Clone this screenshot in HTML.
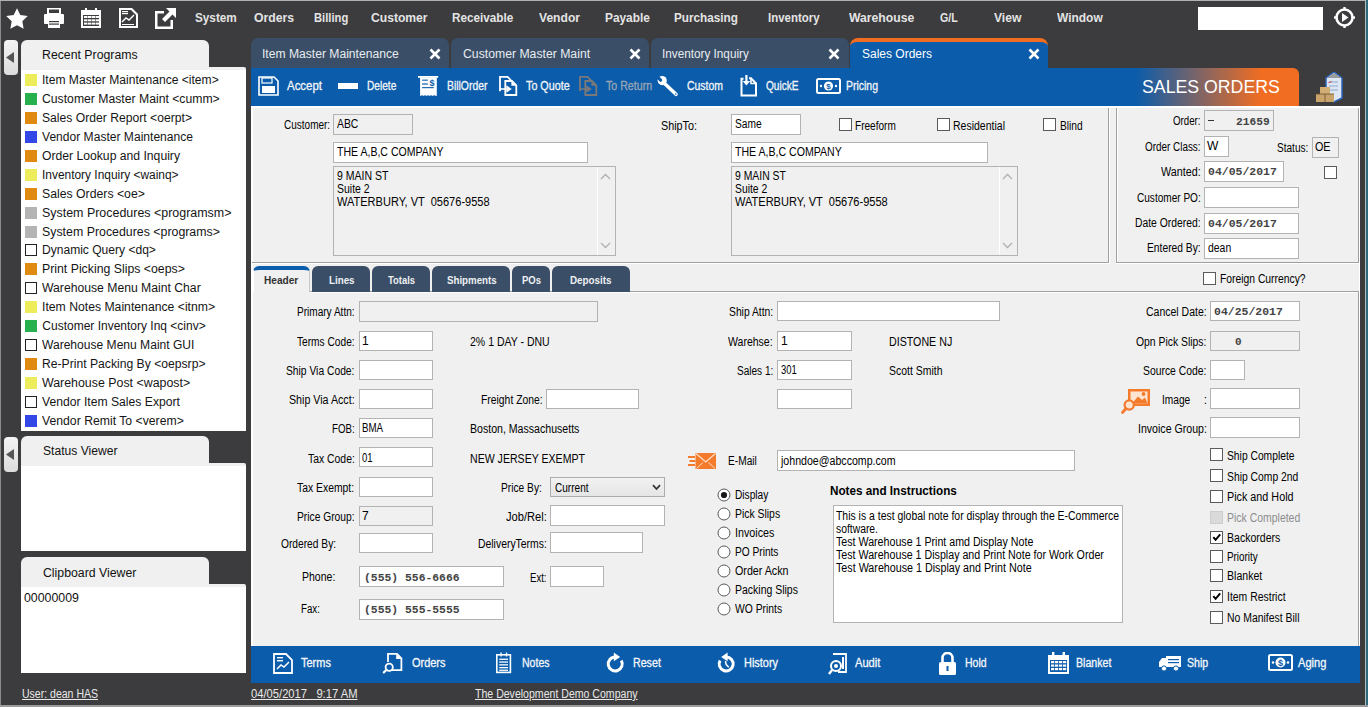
<!DOCTYPE html><html><head><meta charset="utf-8"><style>
html,body{margin:0;padding:0;width:1368px;height:707px;overflow:hidden;background:#3c3c3e}
body>div,body>svg{position:absolute}
</style></head><body>
<div style="left:0px;top:0px;width:1368px;height:707px;background:#3c3c3e"></div>
<div style="left:0px;top:0px;width:1368px;height:1px;background:#b0b0b0"></div>
<div style="left:0px;top:0px;width:1px;height:707px;background:#8c8c8c"></div>
<svg style="left:6px;top:8px" width="22" height="22" viewBox="0 0 22 22"><path d="M11.00 0.30 L14.29 7.07 L21.75 8.11 L16.33 13.33 L17.64 20.74 L11.00 17.20 L4.36 20.74 L5.67 13.33 L0.25 8.11 L7.71 7.07Z" fill="#fff"/></svg>
<svg style="left:44px;top:8px" width="20" height="20" viewBox="0 0 20 20"><rect x="3" y="0" width="14" height="6" fill="#fff"/><rect x="5" y="1.5" width="10" height="3.5" fill="#3c3c3e"/><rect x="0" y="6" width="20" height="10" rx="1" fill="#fff"/><rect x="4" y="12" width="12" height="8" fill="#fff"/><rect x="5" y="13" width="10" height="1.2" fill="#3c3c3e"/><rect x="5" y="15.5" width="10" height="1.2" fill="#3c3c3e"/></svg>
<svg style="left:81px;top:8px" width="20" height="20" viewBox="0 0 20 20"><rect x="0" y="2" width="20" height="18" fill="#fff"/><rect x="4" y="0" width="2" height="4" fill="#fff"/><rect x="14" y="0" width="2" height="4" fill="#fff"/><rect x="2" y="7" width="16" height="11" fill="#3c3c3e"/><rect x="3" y="8" width="3.5" height="2" fill="#fff"/><rect x="3" y="11.3" width="3.5" height="2" fill="#fff"/><rect x="3" y="14.6" width="3.5" height="2" fill="#fff"/><rect x="7" y="8" width="3.5" height="2" fill="#fff"/><rect x="7" y="11.3" width="3.5" height="2" fill="#fff"/><rect x="7" y="14.6" width="3.5" height="2" fill="#fff"/><rect x="11" y="8" width="3.5" height="2" fill="#fff"/><rect x="11" y="11.3" width="3.5" height="2" fill="#fff"/><rect x="11" y="14.6" width="3.5" height="2" fill="#fff"/><rect x="15" y="8" width="3.5" height="2" fill="#fff"/><rect x="15" y="11.3" width="3.5" height="2" fill="#fff"/><rect x="15" y="14.6" width="3.5" height="2" fill="#fff"/></svg>
<svg style="left:119px;top:8px" width="19" height="20" viewBox="0 0 19 20"><path d="M0 0 H13 L19 6 V20 H0Z" fill="#fff"/><path d="M2 2 H12 L17 7 V18 H2Z" fill="#3c3c3e"/><rect x="3" y="3" width="6" height="1.2" fill="#fff"/><rect x="3" y="5" width="6" height="1.2" fill="#fff"/><path d="M3 14 L7 10 L10 12 L15 7" stroke="#fff" stroke-width="1.4" fill="none"/><rect x="3" y="16" width="12" height="1" fill="#fff"/></svg>
<svg style="left:155px;top:8px" width="21" height="21" viewBox="0 0 21 21"><path d="M0 3 H9 V5.5 H2.5 V18.5 H15.5 V12 H18 V21 H0Z" fill="#fff"/><path d="M11 0 H21 V10 L17.5 6.5 L10 14 L7 11 L14.5 3.5Z" fill="#fff"/></svg>
<div style="top:9.39px;font:bold 13px/17px 'Liberation Sans',sans-serif;color:#e4e4e4;white-space:pre;transform-origin:0 0;transform:scaleX(0.9026);left:194.90px;">System</div>
<div style="top:9.39px;font:bold 13px/17px 'Liberation Sans',sans-serif;color:#e4e4e4;white-space:pre;transform-origin:0 0;transform:scaleX(0.9413);left:253.50px;">Orders</div>
<div style="top:9.39px;font:bold 13px/17px 'Liberation Sans',sans-serif;color:#e4e4e4;white-space:pre;transform-origin:0 0;transform:scaleX(0.8615);left:314.20px;">Billing</div>
<div style="top:9.39px;font:bold 13px/17px 'Liberation Sans',sans-serif;color:#e4e4e4;white-space:pre;transform-origin:0 0;transform:scaleX(0.9325);left:371.20px;">Customer</div>
<div style="top:9.39px;font:bold 13px/17px 'Liberation Sans',sans-serif;color:#e4e4e4;white-space:pre;transform-origin:0 0;transform:scaleX(0.9013);left:451.80px;">Receivable</div>
<div style="top:9.39px;font:bold 13px/17px 'Liberation Sans',sans-serif;color:#e4e4e4;white-space:pre;transform-origin:0 0;transform:scaleX(0.9297);left:539.20px;">Vendor</div>
<div style="top:9.39px;font:bold 13px/17px 'Liberation Sans',sans-serif;color:#e4e4e4;white-space:pre;transform-origin:0 0;transform:scaleX(0.9124);left:605.40px;">Payable</div>
<div style="top:9.39px;font:bold 13px/17px 'Liberation Sans',sans-serif;color:#e4e4e4;white-space:pre;transform-origin:0 0;transform:scaleX(0.9025);left:673.70px;">Purchasing</div>
<div style="top:9.39px;font:bold 13px/17px 'Liberation Sans',sans-serif;color:#e4e4e4;white-space:pre;transform-origin:0 0;transform:scaleX(0.8803);left:767.80px;">Inventory</div>
<div style="top:9.39px;font:bold 13px/17px 'Liberation Sans',sans-serif;color:#e4e4e4;white-space:pre;transform-origin:0 0;transform:scaleX(0.9368);left:848.50px;">Warehouse</div>
<div style="top:9.39px;font:bold 13px/17px 'Liberation Sans',sans-serif;color:#e4e4e4;white-space:pre;transform-origin:0 0;transform:scaleX(0.8203);left:940.40px;">G/L</div>
<div style="top:9.39px;font:bold 13px/17px 'Liberation Sans',sans-serif;color:#e4e4e4;white-space:pre;transform-origin:0 0;transform:scaleX(0.9322);left:994.00px;">View</div>
<div style="top:9.39px;font:bold 13px/17px 'Liberation Sans',sans-serif;color:#e4e4e4;white-space:pre;transform-origin:0 0;transform:scaleX(0.9197);left:1057.40px;">Window</div>
<div style="left:1198px;top:7px;width:125px;height:23px;background:#fff"></div>
<svg style="left:1334px;top:7px" width="21" height="21" viewBox="0 0 21 21"><circle cx="10.5" cy="10.5" r="8" stroke="#fff" stroke-width="2.6" fill="none"/><path d="M8 6 L14.5 10.5 L8 15Z" fill="#fff"/><rect x="9.3" y="0" width="2.4" height="3" fill="#fff"/><rect x="9.3" y="18" width="2.4" height="3" fill="#fff"/><rect x="0" y="9.3" width="3" height="2.4" fill="#fff"/><rect x="18" y="9.3" width="3" height="2.4" fill="#fff"/></svg>
<div style="left:4px;top:40px;width:14px;height:35px;background:linear-gradient(#f4f4f4,#dcdcdc);border-radius:4px"></div>
<svg style="left:6px;top:52px" width="9" height="11" viewBox="0 0 9 11"><path d="M8 0 V11 L0 5.5Z" fill="#555"/></svg>
<div style="left:21px;top:40px;width:188px;height:30px;background:#f0f0f0;border-radius:6px 6px 0 0"></div>
<div style="left:21px;top:67px;width:225px;height:4px;background:#f0f0f0;border-radius:0 2px 0 0"></div>
<div style="left:21px;top:70px;width:225px;height:361px;background:#fff"></div>
<div style="top:46.84px;font:12px/16px 'Liberation Sans',sans-serif;color:#111;white-space:pre;transform-origin:0 0;transform:scaleX(1.0246);left:42.30px;">Recent Programs</div>
<div style="left:25px;top:74px;width:12px;height:12px;background:#eded5c"></div>
<div style="top:71.84px;font:12px/16px 'Liberation Sans',sans-serif;color:#151515;white-space:pre;transform-origin:0 0;transform:scaleX(1.0074);left:42.30px;">Item Master Maintenance &lt;item&gt;</div>
<div style="left:25px;top:93px;width:12px;height:12px;background:#27b04e"></div>
<div style="top:90.84px;font:12px/16px 'Liberation Sans',sans-serif;color:#151515;white-space:pre;transform-origin:0 0;transform:scaleX(1.0172);left:42.30px;">Customer Master Maint &lt;cumm&gt;</div>
<div style="left:25px;top:112px;width:12px;height:12px;background:#e08a12"></div>
<div style="top:109.84px;font:12px/16px 'Liberation Sans',sans-serif;color:#151515;white-space:pre;transform-origin:0 0;transform:scaleX(1.0128);left:42.30px;">Sales Order Report &lt;oerpt&gt;</div>
<div style="left:25px;top:131px;width:12px;height:12px;background:#3347e6"></div>
<div style="top:128.84px;font:12px/16px 'Liberation Sans',sans-serif;color:#151515;white-space:pre;transform-origin:0 0;transform:scaleX(1.0060);left:42.30px;">Vendor Master Maintenance</div>
<div style="left:25px;top:150px;width:12px;height:12px;background:#e08a12"></div>
<div style="top:147.84px;font:12px/16px 'Liberation Sans',sans-serif;color:#151515;white-space:pre;transform-origin:0 0;transform:scaleX(1.0140);left:42.30px;">Order Lookup and Inquiry</div>
<div style="left:25px;top:169px;width:12px;height:12px;background:#eded5c"></div>
<div style="top:166.84px;font:12px/16px 'Liberation Sans',sans-serif;color:#151515;white-space:pre;transform-origin:0 0;transform:scaleX(0.9934);left:42.30px;">Inventory Inquiry &lt;wainq&gt;</div>
<div style="left:25px;top:188px;width:12px;height:12px;background:#e08a12"></div>
<div style="top:185.84px;font:12px/16px 'Liberation Sans',sans-serif;color:#151515;white-space:pre;transform-origin:0 0;transform:scaleX(1.0218);left:42.30px;">Sales Orders &lt;oe&gt;</div>
<div style="left:25px;top:207px;width:12px;height:12px;background:#b4b4b4"></div>
<div style="top:204.84px;font:12px/16px 'Liberation Sans',sans-serif;color:#151515;white-space:pre;transform-origin:0 0;transform:scaleX(1.0367);left:42.30px;">System Procedures &lt;programsm&gt;</div>
<div style="left:25px;top:226px;width:12px;height:12px;background:#b4b4b4"></div>
<div style="top:223.84px;font:12px/16px 'Liberation Sans',sans-serif;color:#151515;white-space:pre;transform-origin:0 0;transform:scaleX(1.0301);left:42.30px;">System Procedures &lt;programs&gt;</div>
<div style="left:25px;top:244px;width:12px;height:12px;box-sizing:border-box;border:1px solid #222;background:#fff"></div>
<div style="top:241.84px;font:12px/16px 'Liberation Sans',sans-serif;color:#151515;white-space:pre;transform-origin:0 0;transform:scaleX(1.0044);left:42.30px;">Dynamic Query &lt;dq&gt;</div>
<div style="left:25px;top:263px;width:12px;height:12px;background:#e08a12"></div>
<div style="top:260.84px;font:12px/16px 'Liberation Sans',sans-serif;color:#151515;white-space:pre;transform-origin:0 0;transform:scaleX(1.0244);left:42.30px;">Print Picking Slips &lt;oeps&gt;</div>
<div style="left:25px;top:282px;width:12px;height:12px;box-sizing:border-box;border:1px solid #222;background:#fff"></div>
<div style="top:279.84px;font:12px/16px 'Liberation Sans',sans-serif;color:#151515;white-space:pre;transform-origin:0 0;transform:scaleX(1.0154);left:42.30px;">Warehouse Menu Maint Char</div>
<div style="left:25px;top:301px;width:12px;height:12px;background:#eded5c"></div>
<div style="top:298.84px;font:12px/16px 'Liberation Sans',sans-serif;color:#151515;white-space:pre;transform-origin:0 0;transform:scaleX(1.0176);left:42.30px;">Item Notes Maintenance &lt;itnm&gt;</div>
<div style="left:25px;top:320px;width:12px;height:12px;background:#27b04e"></div>
<div style="top:317.84px;font:12px/16px 'Liberation Sans',sans-serif;color:#151515;white-space:pre;transform-origin:0 0;left:42.30px;">Customer Inventory Inq &lt;cinv&gt;</div>
<div style="left:25px;top:339px;width:12px;height:12px;box-sizing:border-box;border:1px solid #222;background:#fff"></div>
<div style="top:336.84px;font:12px/16px 'Liberation Sans',sans-serif;color:#151515;white-space:pre;transform-origin:0 0;transform:scaleX(1.0053);left:42.30px;">Warehouse Menu Maint GUI</div>
<div style="left:25px;top:358px;width:12px;height:12px;background:#e08a12"></div>
<div style="top:355.84px;font:12px/16px 'Liberation Sans',sans-serif;color:#151515;white-space:pre;transform-origin:0 0;transform:scaleX(1.0130);left:42.30px;">Re-Print Packing By &lt;oepsrp&gt;</div>
<div style="left:25px;top:377px;width:12px;height:12px;background:#eded5c"></div>
<div style="top:374.84px;font:12px/16px 'Liberation Sans',sans-serif;color:#151515;white-space:pre;transform-origin:0 0;transform:scaleX(1.0313);left:42.30px;">Warehouse Post &lt;wapost&gt;</div>
<div style="left:25px;top:396px;width:12px;height:12px;box-sizing:border-box;border:1px solid #222;background:#fff"></div>
<div style="top:393.84px;font:12px/16px 'Liberation Sans',sans-serif;color:#151515;white-space:pre;transform-origin:0 0;transform:scaleX(1.0140);left:42.30px;">Vendor Item Sales Export</div>
<div style="left:25px;top:415px;width:12px;height:12px;background:#3347e6"></div>
<div style="top:412.84px;font:12px/16px 'Liberation Sans',sans-serif;color:#151515;white-space:pre;transform-origin:0 0;transform:scaleX(1.0187);left:42.30px;">Vendor Remit To &lt;verem&gt;</div>
<div style="left:4px;top:437px;width:14px;height:35px;background:linear-gradient(#f4f4f4,#dcdcdc);border-radius:4px"></div>
<svg style="left:6px;top:449px" width="9" height="11" viewBox="0 0 9 11"><path d="M8 0 V11 L0 5.5Z" fill="#555"/></svg>
<div style="left:21px;top:436px;width:188px;height:30px;background:#f0f0f0;border-radius:6px 6px 0 0"></div>
<div style="left:21px;top:463px;width:225px;height:4px;background:#f0f0f0;border-radius:0 2px 0 0"></div>
<div style="left:21px;top:466px;width:225px;height:85px;background:#fff"></div>
<div style="top:442.84px;font:12px/16px 'Liberation Sans',sans-serif;color:#111;white-space:pre;transform-origin:0 0;transform:scaleX(1.0081);left:42.60px;">Status Viewer</div>
<div style="left:21px;top:557px;width:188px;height:30px;background:#f0f0f0;border-radius:6px 6px 0 0"></div>
<div style="left:21px;top:584px;width:225px;height:4px;background:#f0f0f0;border-radius:0 2px 0 0"></div>
<div style="left:21px;top:587px;width:225px;height:86px;background:#fff"></div>
<div style="top:564.84px;font:12px/16px 'Liberation Sans',sans-serif;color:#111;white-space:pre;transform-origin:0 0;transform:scaleX(1.0241);left:42.60px;">Clipboard Viewer</div>
<div style="top:589.84px;font:12px/16px 'Liberation Sans',sans-serif;color:#111;white-space:pre;transform-origin:0 0;transform:scaleX(1.0281);left:23.50px;">00000009</div>
<div style="top:686.34px;font:12px/16px 'Liberation Sans',sans-serif;color:#e8e8e8;white-space:pre;transform-origin:0 0;transform:scaleX(0.8766);left:22.30px;text-decoration:underline">User: dean HAS</div>
<div style="left:251px;top:38px;width:198px;height:31px;background:#3a4f67;border-radius:7px 7px 0 0"></div>
<div style="top:46.14px;font:12px/16px 'Liberation Sans',sans-serif;color:#e8ecf0;white-space:pre;transform-origin:0 0;transform:scaleX(1.0096);left:262.30px;">Item Master Maintenance</div>
<svg style="left:429px;top:48px" width="12" height="12" viewBox="0 0 12 12"><path d="M1.5 1.5 L10.5 10.5 M10.5 1.5 L1.5 10.5" stroke="#fff" stroke-width="2.6"/></svg>
<div style="left:451px;top:38px;width:198px;height:31px;background:#3a4f67;border-radius:7px 7px 0 0"></div>
<div style="top:46.14px;font:12px/16px 'Liberation Sans',sans-serif;color:#e8ecf0;white-space:pre;transform-origin:0 0;transform:scaleX(1.0192);left:462.50px;">Customer Master Maint</div>
<svg style="left:629px;top:48px" width="12" height="12" viewBox="0 0 12 12"><path d="M1.5 1.5 L10.5 10.5 M10.5 1.5 L1.5 10.5" stroke="#fff" stroke-width="2.6"/></svg>
<div style="left:651px;top:38px;width:198px;height:31px;background:#3a4f67;border-radius:7px 7px 0 0"></div>
<div style="top:46.14px;font:12px/16px 'Liberation Sans',sans-serif;color:#e8ecf0;white-space:pre;transform-origin:0 0;transform:scaleX(0.9786);left:661.90px;">Inventory Inquiry</div>
<svg style="left:828.4px;top:48px" width="12" height="12" viewBox="0 0 12 12"><path d="M1.5 1.5 L10.5 10.5 M10.5 1.5 L1.5 10.5" stroke="#fff" stroke-width="2.6"/></svg>
<div style="left:850px;top:38px;width:198px;height:31px;background:#0b5cab;border-radius:8px 8px 0 0;border-top:4px solid #f06d22;box-sizing:border-box"></div>
<div style="top:46.14px;font:12px/16px 'Liberation Sans',sans-serif;color:#fff;white-space:pre;transform-origin:0 0;left:862.00px;">Sales Orders</div>
<svg style="left:1028.3px;top:48px" width="12" height="12" viewBox="0 0 12 12"><path d="M1.5 1.5 L10.5 10.5 M10.5 1.5 L1.5 10.5" stroke="#fff" stroke-width="2.6"/></svg>
<div style="left:251px;top:68px;width:1048px;height:38px;background:linear-gradient(90deg,#0b5cab 0px,#0b5cab 885px,#f06d22 1010px,#f06d22);border-radius:0 6px 0 0"></div>
<div style="top:76.26px;font:18px/23px 'Liberation Sans',sans-serif;color:#fff;white-space:pre;transform-origin:0 0;transform:scaleX(0.9843);left:1141.90px;">SALES ORDERS</div>
<div style="top:77.84px;font:12px/16px 'Liberation Sans',sans-serif;color:#f2f5f8;white-space:pre;transform-origin:0 0;transform:scaleX(0.9537);left:286.70px;-webkit-text-stroke:0.3px #f2f5f8;">Accept</div>
<div style="top:77.84px;font:12px/16px 'Liberation Sans',sans-serif;color:#f2f5f8;white-space:pre;transform-origin:0 0;transform:scaleX(0.8444);left:366.70px;-webkit-text-stroke:0.3px #f2f5f8;">Delete</div>
<div style="top:77.84px;font:12px/16px 'Liberation Sans',sans-serif;color:#f2f5f8;white-space:pre;transform-origin:0 0;transform:scaleX(0.8651);left:446.70px;-webkit-text-stroke:0.3px #f2f5f8;">BillOrder</div>
<div style="top:77.84px;font:12px/16px 'Liberation Sans',sans-serif;color:#f2f5f8;white-space:pre;transform-origin:0 0;transform:scaleX(0.8973);left:526.40px;-webkit-text-stroke:0.3px #f2f5f8;">To Quote</div>
<div style="top:77.84px;font:12px/16px 'Liberation Sans',sans-serif;color:#9aa5b3;white-space:pre;transform-origin:0 0;transform:scaleX(0.8865);left:606.40px;-webkit-text-stroke:0.3px #9aa5b3;">To Return</div>
<div style="top:77.84px;font:12px/16px 'Liberation Sans',sans-serif;color:#f2f5f8;white-space:pre;transform-origin:0 0;transform:scaleX(0.8692);left:686.50px;-webkit-text-stroke:0.3px #f2f5f8;">Custom</div>
<div style="top:77.84px;font:12px/16px 'Liberation Sans',sans-serif;color:#f2f5f8;white-space:pre;transform-origin:0 0;transform:scaleX(0.8424);left:766.20px;-webkit-text-stroke:0.3px #f2f5f8;">QuickE</div>
<div style="top:77.84px;font:12px/16px 'Liberation Sans',sans-serif;color:#f2f5f8;white-space:pre;transform-origin:0 0;transform:scaleX(0.8719);left:845.80px;-webkit-text-stroke:0.3px #f2f5f8;">Pricing</div>
<div style="left:600px;top:70px;width:0px;height:0px;"></div>
<svg style="left:258px;top:76px" width="21" height="20" viewBox="0 0 21 20"><path d="M1 1 H16 L20 5 V19 H1Z" stroke="#fff" stroke-width="1.6" fill="none"/><rect x="4" y="2" width="10" height="5" stroke="#fff" stroke-width="1.2" fill="none"/><rect x="4" y="10" width="13" height="7" fill="#fff"/></svg>
<div style="left:338px;top:83px;width:20px;height:6px;background:#fff"></div>
<svg style="left:414px;top:72px" width="28" height="28" viewBox="0 0 28 28"><rect x="4" y="4" width="20.2" height="1.8" fill="#fff"/><rect x="6.1" y="5.5" width="16.7" height="18.3" fill="#fff"/><rect x="7.5" y="23" width="1.2" height="0.8" fill="#0b5cab"/><rect x="10.5" y="23" width="1.2" height="0.8" fill="#0b5cab"/><rect x="13.5" y="23" width="1.2" height="0.8" fill="#0b5cab"/><rect x="16.5" y="23" width="1.2" height="0.8" fill="#0b5cab"/><rect x="19.5" y="23" width="1.2" height="0.8" fill="#0b5cab"/><rect x="8.1" y="7.6" width="5.8" height="1.1" fill="#0b5cab"/><rect x="8.1" y="11.4" width="5.8" height="1.2" fill="#0b5cab"/><rect x="8.1" y="15.1" width="11.7" height="1.1" fill="#0b5cab"/><text x="17.9" y="13.6" font-size="9" font-family="Liberation Sans" font-weight="bold" fill="#0b5cab" text-anchor="middle">$</text></svg>
<svg style="left:494px;top:72px" width="30" height="28" viewBox="0 0 30 28"><path d="M6 19.2 V4.9 H13.6 L17 8.3" stroke="#fff" stroke-width="1.8" fill="none"/><path d="M11.3 9 H18 L22.3 13.3 V23 H11.3Z" stroke="#fff" stroke-width="1.8" fill="#0b5cab"/><path d="M17.4 9 V13.8 H22.3Z" fill="#fff"/><path d="M5.5 17 H12.5" stroke="#fff" stroke-width="1.6"/><path d="M12.3 13.3 L17.8 17 L12.3 20.7Z" fill="#fff"/></svg>
<svg style="left:574px;top:72px" width="30" height="28" viewBox="0 0 30 28"><path d="M6 19.2 V4.9 H13.6 L17 8.3" stroke="#7a7878" stroke-width="1.8" fill="none"/><path d="M11.3 9 H18 L22.3 13.3 V23 H11.3Z" stroke="#7a7878" stroke-width="1.8" fill="#0b5cab"/><path d="M17.4 9 V13.8 H22.3Z" fill="#7a7878"/><path d="M5.5 17 H12.5" stroke="#7a7878" stroke-width="1.6"/><path d="M12.3 13.3 L17.8 17 L12.3 20.7Z" fill="#7a7878"/></svg>
<svg style="left:652px;top:72px" width="30" height="28" viewBox="0 0 30 28"><path d="M11.5 10.5 L24 22.3" stroke="#fff" stroke-width="3.6" stroke-linecap="round"/><circle cx="10.2" cy="8.6" r="4.6" fill="#fff"/><path d="M4 3.5 L8.6 8.2" stroke="#0b5cab" stroke-width="3.2" stroke-linecap="round"/><circle cx="23.8" cy="22" r="0.8" fill="#0b5cab"/></svg>
<svg style="left:740px;top:75px" width="18" height="22" viewBox="0 0 18 22"><path d="M3.5 3.8 H1.5 V20.5 H16 V8.5 L11 3.2 H9" stroke="#fff" stroke-width="2" fill="none"/><path d="M11 3 V8.5 H16.5" stroke="#fff" stroke-width="1.6" fill="none"/><rect x="5.3" y="0" width="2.2" height="7" fill="#fff"/><path d="M2.6 6 H10.2 L6.4 10.5Z" fill="#fff"/></svg>
<svg style="left:816px;top:78px" width="25" height="16" viewBox="0 0 25 16"><rect x="1" y="1" width="23" height="14" rx="1.5" stroke="#fff" stroke-width="2" fill="none"/><circle cx="12.5" cy="8" r="4.6" fill="#fff"/><text x="12.5" y="11" font-size="8" font-family="Liberation Sans" font-weight="bold" fill="#0b5cab" text-anchor="middle">$</text><circle cx="5" cy="8" r="1.2" fill="#fff"/><circle cx="20" cy="8" r="1.2" fill="#fff"/></svg>
<svg style="left:1316px;top:72px" width="28" height="31" viewBox="0 0 28 31"><path d="M10 6 L18 0 L26 6 V26 L18 30 L10 26Z" fill="#dde6f2" stroke="#2c64b8" stroke-width="1.5"/><path d="M11 6 L18 1 L25 6Z" fill="#9a9a9a"/><path d="M13 10 h9 M13 14 h9 M13 18 h9" stroke="#8aa8d0" stroke-width="1"/><path d="M12.5 10 l1 1 l2-2" stroke="#d03030" fill="none"/><rect x="0" y="22" width="10" height="8" fill="#c9a46a"/><rect x="9" y="22" width="9" height="8" fill="#c9a46a"/><rect x="4" y="15" width="10" height="7" fill="#d2ae74"/><path d="M0 22h18 M9 22v8" stroke="#6a5030" stroke-width="0.8"/></svg>
<div style="left:251px;top:106px;width:1109px;height:541px;background:#f0f0f0"></div>
<div style="left:251px;top:106px;width:1109px;height:2px;background:#fff"></div>
<div style="left:251px;top:106px;width:2px;height:541px;background:#fff"></div>
<div style="left:1359px;top:106px;width:1px;height:541px;background:#fff"></div>
<div style="left:1362px;top:0px;width:3px;height:707px;background:#393d39"></div>
<div style="left:1365px;top:0px;width:1px;height:707px;background:#b4b9bd"></div>
<div style="left:1366px;top:0px;width:2px;height:707px;background:#2a6a7a"></div>
<div style="left:0px;top:0px;width:1365px;height:1px;background:#b0b0b0"></div>
<div style="left:0px;top:705px;width:1368px;height:2px;background:#9c9c9c"></div>
<div style="left:1108px;top:108px;width:1px;height:155px;background:#a0a0a0"></div>
<div style="left:1109px;top:108px;width:1px;height:156px;background:#fff"></div>
<div style="left:252px;top:262px;width:857px;height:1px;background:#a0a0a0"></div>
<div style="left:252px;top:263px;width:858px;height:1px;background:#fff"></div>
<div style="left:1116px;top:108px;width:1px;height:155px;background:#a0a0a0"></div>
<div style="left:1117px;top:108px;width:1px;height:155px;background:#fff"></div>
<div style="left:1116px;top:262px;width:243px;height:1px;background:#a0a0a0"></div>
<div style="left:1116px;top:263px;width:243px;height:1px;background:#fff"></div>
<div style="left:1358px;top:108px;width:1px;height:155px;background:#a0a0a0"></div>
<div style="top:116.84px;font:12px/16px 'Liberation Sans',sans-serif;color:#000;white-space:pre;transform-origin:0 0;transform:scaleX(0.8336);left:283.90px;">Customer:</div>
<div style="left:333px;top:114px;width:80px;height:21px;box-sizing:border-box;border:1px solid #b3b3b3;background:#f0f0f0"></div>
<div style="top:115.84px;font:12px/16px 'Liberation Sans',sans-serif;color:#000;white-space:pre;transform-origin:0 0;transform:scaleX(0.8664);left:336.50px;">ABC</div>
<div style="left:333px;top:142px;width:255px;height:21px;box-sizing:border-box;border:1px solid #b3b3b3;background:#fff"></div>
<div style="top:143.84px;font:12px/16px 'Liberation Sans',sans-serif;color:#000;white-space:pre;transform-origin:0 0;transform:scaleX(0.8786);left:337.40px;">THE A,B,C COMPANY</div>
<div style="left:333px;top:166px;width:283px;height:90px;box-sizing:border-box;border:1px solid #b3b3b3;background:#f0f0f0"></div>
<div style="left:597px;top:167px;width:1px;height:88px;background:#fff"></div>
<div style="top:167.84px;font:12px/16px 'Liberation Sans',sans-serif;color:#000;white-space:pre;transform-origin:0 0;transform:scaleX(0.8756);left:336.80px;">9 MAIN ST</div>
<div style="top:180.84px;font:12px/16px 'Liberation Sans',sans-serif;color:#000;white-space:pre;transform-origin:0 0;transform:scaleX(0.8743);left:336.80px;">Suite 2</div>
<div style="top:193.84px;font:12px/16px 'Liberation Sans',sans-serif;color:#000;white-space:pre;transform-origin:0 0;transform:scaleX(0.9187);left:336.80px;">WATERBURY, VT  05676-9558</div>
<svg style="left:600px;top:173px" width="11" height="7" viewBox="0 0 11 7"><path d="M1 6 L5.5 1.5 L10 6" stroke="#b0b0b0" stroke-width="1.3" fill="none"/></svg>
<svg style="left:600px;top:242px" width="11" height="7" viewBox="0 0 11 7"><path d="M1 1 L5.5 5.5 L10 1" stroke="#b0b0b0" stroke-width="1.3" fill="none"/></svg>
<div style="top:117.84px;font:12px/16px 'Liberation Sans',sans-serif;color:#000;white-space:pre;transform-origin:0 0;transform:scaleX(0.9000);left:660.50px;">ShipTo:</div>
<div style="left:731px;top:114px;width:70px;height:21px;box-sizing:border-box;border:1px solid #b3b3b3;background:#fff"></div>
<div style="top:115.84px;font:12px/16px 'Liberation Sans',sans-serif;color:#000;white-space:pre;transform-origin:0 0;transform:scaleX(0.8498);left:734.50px;">Same</div>
<div style="left:839px;top:118px;width:13px;height:13px;background:#fff;box-sizing:border-box;border:1px solid #5a5a5a"></div>
<div style="top:117.84px;font:12px/16px 'Liberation Sans',sans-serif;color:#000;white-space:pre;transform-origin:0 0;transform:scaleX(0.8378);left:855.30px;">Freeform</div>
<div style="left:937px;top:118px;width:13px;height:13px;background:#fff;box-sizing:border-box;border:1px solid #5a5a5a"></div>
<div style="top:117.84px;font:12px/16px 'Liberation Sans',sans-serif;color:#000;white-space:pre;transform-origin:0 0;transform:scaleX(0.8754);left:953.30px;">Residential</div>
<div style="left:1043px;top:118px;width:13px;height:13px;background:#fff;box-sizing:border-box;border:1px solid #5a5a5a"></div>
<div style="top:117.84px;font:12px/16px 'Liberation Sans',sans-serif;color:#000;white-space:pre;transform-origin:0 0;transform:scaleX(0.8502);left:1059.90px;">Blind</div>
<div style="left:731px;top:142px;width:257px;height:21px;box-sizing:border-box;border:1px solid #b3b3b3;background:#fff"></div>
<div style="top:143.84px;font:12px/16px 'Liberation Sans',sans-serif;color:#000;white-space:pre;transform-origin:0 0;transform:scaleX(0.8811);left:735.10px;">THE A,B,C COMPANY</div>
<div style="left:731px;top:166px;width:287px;height:90px;box-sizing:border-box;border:1px solid #b3b3b3;background:#f0f0f0"></div>
<div style="left:999px;top:167px;width:1px;height:88px;background:#fff"></div>
<div style="top:167.84px;font:12px/16px 'Liberation Sans',sans-serif;color:#000;white-space:pre;transform-origin:0 0;transform:scaleX(0.8671);left:734.70px;">9 MAIN ST</div>
<div style="top:180.84px;font:12px/16px 'Liberation Sans',sans-serif;color:#000;white-space:pre;transform-origin:0 0;transform:scaleX(0.8636);left:734.70px;">Suite 2</div>
<div style="top:193.84px;font:12px/16px 'Liberation Sans',sans-serif;color:#000;white-space:pre;transform-origin:0 0;transform:scaleX(0.9193);left:734.70px;">WATERBURY, VT  05676-9558</div>
<svg style="left:1002px;top:173px" width="11" height="7" viewBox="0 0 11 7"><path d="M1 6 L5.5 1.5 L10 6" stroke="#b0b0b0" stroke-width="1.3" fill="none"/></svg>
<svg style="left:1002px;top:242px" width="11" height="7" viewBox="0 0 11 7"><path d="M1 1 L5.5 5.5 L10 1" stroke="#b0b0b0" stroke-width="1.3" fill="none"/></svg>
<div style="top:112.84px;font:12px/16px 'Liberation Sans',sans-serif;color:#000;white-space:pre;transform-origin:0 0;transform:scaleX(0.8088);left:1172.70px;">Order:</div>
<div style="left:1204px;top:110px;width:70px;height:21px;box-sizing:border-box;border:1px solid #b3b3b3;background:#f0f0f0"></div>
<div style="left:1208px;top:120px;width:6px;height:1px;background:#333"></div>
<div style="top:115.07px;font:bold 11px/14px 'Liberation Mono',monospace;color:#444;white-space:pre;transform-origin:0 0;transform:scaleX(1.0212);left:1235.90px;">21659</div>
<div style="top:138.84px;font:12px/16px 'Liberation Sans',sans-serif;color:#000;white-space:pre;transform-origin:0 0;transform:scaleX(0.8247);left:1144.70px;">Order Class:</div>
<div style="left:1204px;top:136px;width:25px;height:21px;box-sizing:border-box;border:1px solid #b3b3b3;background:#fff"></div>
<div style="top:137.84px;font:12px/16px 'Liberation Sans',sans-serif;color:#000;white-space:pre;transform-origin:0 0;left:1206.90px;">W</div>
<div style="top:139.84px;font:12px/16px 'Liberation Sans',sans-serif;color:#000;white-space:pre;transform-origin:0 0;transform:scaleX(0.8396);left:1276.80px;">Status:</div>
<div style="left:1312px;top:137px;width:27px;height:21px;box-sizing:border-box;border:1px solid #b3b3b3;background:#f0f0f0"></div>
<div style="top:138.84px;font:12px/16px 'Liberation Sans',sans-serif;color:#000;white-space:pre;transform-origin:0 0;transform:scaleX(0.8960);left:1315.40px;">OE</div>
<div style="top:163.84px;font:12px/16px 'Liberation Sans',sans-serif;color:#000;white-space:pre;transform-origin:0 0;transform:scaleX(0.8982);left:1160.50px;">Wanted:</div>
<div style="left:1204px;top:161px;width:80px;height:21px;box-sizing:border-box;border:1px solid #b3b3b3;background:#fff"></div>
<div style="top:165.07px;font:bold 11px/14px 'Liberation Mono',monospace;color:#444;white-space:pre;transform-origin:0 0;transform:scaleX(1.0424);left:1207.80px;">04/05/2017</div>
<div style="left:1324px;top:166px;width:13px;height:13px;background:#fff;box-sizing:border-box;border:1px solid #5a5a5a"></div>
<div style="top:189.84px;font:12px/16px 'Liberation Sans',sans-serif;color:#000;white-space:pre;transform-origin:0 0;transform:scaleX(0.8382);left:1136.70px;">Customer PO:</div>
<div style="left:1204px;top:187px;width:95px;height:21px;box-sizing:border-box;border:1px solid #b3b3b3;background:#fff"></div>
<div style="top:214.84px;font:12px/16px 'Liberation Sans',sans-serif;color:#000;white-space:pre;transform-origin:0 0;transform:scaleX(0.8618);left:1134.90px;">Date Ordered:</div>
<div style="left:1204px;top:213px;width:95px;height:21px;box-sizing:border-box;border:1px solid #b3b3b3;background:#fff"></div>
<div style="top:217.07px;font:bold 11px/14px 'Liberation Mono',monospace;color:#444;white-space:pre;transform-origin:0 0;transform:scaleX(1.0424);left:1207.80px;">04/05/2017</div>
<div style="top:239.84px;font:12px/16px 'Liberation Sans',sans-serif;color:#000;white-space:pre;transform-origin:0 0;transform:scaleX(0.8565);left:1146.70px;">Entered By:</div>
<div style="left:1204px;top:238px;width:95px;height:21px;box-sizing:border-box;border:1px solid #b3b3b3;background:#fff"></div>
<div style="top:239.84px;font:12px/16px 'Liberation Sans',sans-serif;color:#000;white-space:pre;transform-origin:0 0;transform:scaleX(0.8689);left:1207.80px;">dean</div>
<div style="left:1203px;top:272px;width:13px;height:13px;background:#fff;box-sizing:border-box;border:1px solid #5a5a5a"></div>
<div style="top:270.84px;font:12px/16px 'Liberation Sans',sans-serif;color:#000;white-space:pre;transform-origin:0 0;transform:scaleX(0.8612);left:1219.50px;">Foreign Currency?</div>
<div style="left:310px;top:291px;width:1049px;height:1px;background:#a0a0a0"></div>
<div style="left:310px;top:292px;width:1048px;height:1px;background:#fff"></div>
<div style="left:1358px;top:291px;width:1px;height:355px;background:#a0a0a0"></div>
<div style="left:252px;top:292px;width:1px;height:355px;background:#fff"></div>
<div style="left:253px;top:266px;width:57px;height:27px;background:#f0f0f0;border-radius:6px 6px 0 0;border-top:4px solid #0b5cab;box-sizing:border-box"></div>
<div style="left:253px;top:270px;width:1px;height:22px;background:#fff"></div>
<div style="left:309px;top:270px;width:1px;height:22px;background:#c8c8c8"></div>
<div style="top:273.36px;font:bold 10.5px/14px 'Liberation Sans',sans-serif;color:#333;white-space:pre;transform-origin:0 0;transform:scaleX(0.9635);left:264.00px;">Header</div>
<div style="left:312px;top:266px;width:58px;height:26px;background:#3a4f67;border-radius:6px 6px 0 0"></div>
<div style="top:273.36px;font:bold 10.5px/14px 'Liberation Sans',sans-serif;color:#eef0f3;white-space:pre;transform-origin:0 0;transform:scaleX(0.9307);left:328.50px;">Lines</div>
<div style="left:372px;top:266px;width:58px;height:26px;background:#3a4f67;border-radius:6px 6px 0 0"></div>
<div style="top:273.36px;font:bold 10.5px/14px 'Liberation Sans',sans-serif;color:#eef0f3;white-space:pre;transform-origin:0 0;transform:scaleX(0.8970);left:387.50px;">Totals</div>
<div style="left:432px;top:266px;width:78px;height:26px;background:#3a4f67;border-radius:6px 6px 0 0"></div>
<div style="top:273.36px;font:bold 10.5px/14px 'Liberation Sans',sans-serif;color:#eef0f3;white-space:pre;transform-origin:0 0;transform:scaleX(0.9255);left:446.50px;">Shipments</div>
<div style="left:512px;top:266px;width:37.5px;height:26px;background:#3a4f67;border-radius:6px 6px 0 0"></div>
<div style="top:273.36px;font:bold 10.5px/14px 'Liberation Sans',sans-serif;color:#eef0f3;white-space:pre;transform-origin:0 0;transform:scaleX(0.9048);left:521.80px;">POs</div>
<div style="left:552px;top:266px;width:78px;height:26px;background:#3a4f67;border-radius:6px 6px 0 0"></div>
<div style="top:273.36px;font:bold 10.5px/14px 'Liberation Sans',sans-serif;color:#eef0f3;white-space:pre;transform-origin:0 0;transform:scaleX(0.9368);left:570.00px;">Deposits</div>
<div style="top:303.84px;font:12px/16px 'Liberation Sans',sans-serif;color:#000;white-space:pre;transform-origin:0 0;transform:scaleX(0.8384);left:296.90px;">Primary Attn:</div>
<div style="left:359px;top:301px;width:239px;height:21px;box-sizing:border-box;border:1px solid #b3b3b3;background:#f0f0f0"></div>
<div style="top:333.84px;font:12px/16px 'Liberation Sans',sans-serif;color:#000;white-space:pre;transform-origin:0 0;transform:scaleX(0.8471);left:296.90px;">Terms Code:</div>
<div style="left:359px;top:331px;width:74px;height:20px;box-sizing:border-box;border:1px solid #b3b3b3;background:#fff"></div>
<div style="top:332.84px;font:12px/16px 'Liberation Sans',sans-serif;color:#000;white-space:pre;transform-origin:0 0;left:361.90px;">1</div>
<div style="top:362.84px;font:12px/16px 'Liberation Sans',sans-serif;color:#000;white-space:pre;transform-origin:0 0;transform:scaleX(0.8571);left:286.10px;">Ship Via Code:</div>
<div style="left:359px;top:360px;width:74px;height:20px;box-sizing:border-box;border:1px solid #b3b3b3;background:#fff"></div>
<div style="top:391.84px;font:12px/16px 'Liberation Sans',sans-serif;color:#000;white-space:pre;transform-origin:0 0;transform:scaleX(0.8889);left:288.90px;">Ship Via Acct:</div>
<div style="left:359px;top:389px;width:74px;height:20px;box-sizing:border-box;border:1px solid #b3b3b3;background:#fff"></div>
<div style="top:420.84px;font:12px/16px 'Liberation Sans',sans-serif;color:#000;white-space:pre;transform-origin:0 0;transform:scaleX(0.8071);left:331.90px;">FOB:</div>
<div style="left:359px;top:418px;width:74px;height:20px;box-sizing:border-box;border:1px solid #b3b3b3;background:#fff"></div>
<div style="top:419.84px;font:12px/16px 'Liberation Sans',sans-serif;color:#000;white-space:pre;transform-origin:0 0;transform:scaleX(0.8115);left:361.90px;">BMA</div>
<div style="top:450.84px;font:12px/16px 'Liberation Sans',sans-serif;color:#000;white-space:pre;transform-origin:0 0;transform:scaleX(0.8667);left:307.70px;">Tax Code:</div>
<div style="left:359px;top:447px;width:74px;height:20px;box-sizing:border-box;border:1px solid #b3b3b3;background:#fff"></div>
<div style="top:449.84px;font:12px/16px 'Liberation Sans',sans-serif;color:#000;white-space:pre;transform-origin:0 0;transform:scaleX(0.7970);left:361.90px;">01</div>
<div style="top:479.84px;font:12px/16px 'Liberation Sans',sans-serif;color:#000;white-space:pre;transform-origin:0 0;transform:scaleX(0.8652);left:297.40px;">Tax Exempt:</div>
<div style="left:359px;top:477px;width:74px;height:20px;box-sizing:border-box;border:1px solid #b3b3b3;background:#fff"></div>
<div style="top:508.84px;font:12px/16px 'Liberation Sans',sans-serif;color:#000;white-space:pre;transform-origin:0 0;transform:scaleX(0.8546);left:296.90px;">Price Group:</div>
<div style="left:359px;top:506px;width:74px;height:20px;box-sizing:border-box;border:1px solid #b3b3b3;background:#f0f0f0"></div>
<div style="top:507.84px;font:12px/16px 'Liberation Sans',sans-serif;color:#000;white-space:pre;transform-origin:0 0;left:361.90px;">7</div>
<div style="top:333.84px;font:12px/16px 'Liberation Sans',sans-serif;color:#000;white-space:pre;transform-origin:0 0;transform:scaleX(0.8768);left:469.60px;">2% 1 DAY - DNU</div>
<div style="top:420.84px;font:12px/16px 'Liberation Sans',sans-serif;color:#000;white-space:pre;transform-origin:0 0;transform:scaleX(0.8815);left:469.60px;">Boston, Massachusetts</div>
<div style="top:450.84px;font:12px/16px 'Liberation Sans',sans-serif;color:#000;white-space:pre;transform-origin:0 0;transform:scaleX(0.8812);left:469.80px;">NEW JERSEY EXEMPT</div>
<div style="top:391.84px;font:12px/16px 'Liberation Sans',sans-serif;color:#000;white-space:pre;transform-origin:0 0;transform:scaleX(0.8641);left:480.60px;">Freight Zone:</div>
<div style="left:546px;top:389px;width:93px;height:20px;box-sizing:border-box;border:1px solid #b3b3b3;background:#fff"></div>
<div style="top:479.84px;font:12px/16px 'Liberation Sans',sans-serif;color:#000;white-space:pre;transform-origin:0 0;transform:scaleX(0.8500);left:500.70px;">Price By:</div>
<div style="left:550px;top:477px;width:115px;height:20px;box-sizing:border-box;border:1px solid #acacac;background:linear-gradient(#f2f2f2,#e5e5e5)"></div>
<div style="top:479.84px;font:12px/16px 'Liberation Sans',sans-serif;color:#000;white-space:pre;transform-origin:0 0;transform:scaleX(0.8375);left:554.70px;">Current</div>
<svg style="left:652px;top:484px" width="9" height="7" viewBox="0 0 9 7"><path d="M1 1.2 L4.5 5 L8 1.2" stroke="#333" stroke-width="1.7" fill="none"/></svg>
<div style="top:508.84px;font:12px/16px 'Liberation Sans',sans-serif;color:#000;white-space:pre;transform-origin:0 0;transform:scaleX(0.9273);left:505.80px;">Job/Rel:</div>
<div style="left:550px;top:505px;width:115px;height:21px;box-sizing:border-box;border:1px solid #b3b3b3;background:#fff"></div>
<div style="top:535.84px;font:12px/16px 'Liberation Sans',sans-serif;color:#000;white-space:pre;transform-origin:0 0;transform:scaleX(0.8516);left:280.90px;">Ordered By:</div>
<div style="left:359px;top:533px;width:74px;height:20px;box-sizing:border-box;border:1px solid #b3b3b3;background:#fff"></div>
<div style="top:535.84px;font:12px/16px 'Liberation Sans',sans-serif;color:#000;white-space:pre;transform-origin:0 0;transform:scaleX(0.8676);left:477.80px;">DeliveryTerms:</div>
<div style="left:550px;top:532px;width:93px;height:21px;box-sizing:border-box;border:1px solid #b3b3b3;background:#fff"></div>
<div style="top:568.84px;font:12px/16px 'Liberation Sans',sans-serif;color:#000;white-space:pre;transform-origin:0 0;transform:scaleX(0.8763);left:302.00px;">Phone:</div>
<div style="left:359px;top:566px;width:145px;height:21px;box-sizing:border-box;border:1px solid #b3b3b3;background:#fff"></div>
<div style="top:571.07px;font:bold 11px/14px 'Liberation Mono',monospace;color:#444;white-space:pre;transform-origin:0 0;transform:scaleX(1.0346);left:363.70px;">(555) 556-6666</div>
<div style="top:569.84px;font:12px/16px 'Liberation Sans',sans-serif;color:#000;white-space:pre;transform-origin:0 0;transform:scaleX(0.7971);left:530.00px;">Ext:</div>
<div style="left:550px;top:566px;width:54px;height:21px;box-sizing:border-box;border:1px solid #b3b3b3;background:#fff"></div>
<div style="top:600.84px;font:12px/16px 'Liberation Sans',sans-serif;color:#000;white-space:pre;transform-origin:0 0;transform:scaleX(0.8069);left:301.10px;">Fax:</div>
<div style="left:359px;top:599px;width:145px;height:21px;box-sizing:border-box;border:1px solid #b3b3b3;background:#fff"></div>
<div style="top:603.07px;font:bold 11px/14px 'Liberation Mono',monospace;color:#444;white-space:pre;transform-origin:0 0;transform:scaleX(1.0346);left:363.70px;">(555) 555-5555</div>
<div style="top:303.84px;font:12px/16px 'Liberation Sans',sans-serif;color:#000;white-space:pre;transform-origin:0 0;transform:scaleX(0.8599);left:728.80px;">Ship Attn:</div>
<div style="left:777px;top:301px;width:223px;height:20px;box-sizing:border-box;border:1px solid #b3b3b3;background:#fff"></div>
<div style="top:333.84px;font:12px/16px 'Liberation Sans',sans-serif;color:#000;white-space:pre;transform-origin:0 0;transform:scaleX(0.8762);left:728.40px;">Warehse:</div>
<div style="left:777px;top:331px;width:75px;height:20px;box-sizing:border-box;border:1px solid #b3b3b3;background:#fff"></div>
<div style="top:332.84px;font:12px/16px 'Liberation Sans',sans-serif;color:#000;white-space:pre;transform-origin:0 0;left:780.90px;">1</div>
<div style="top:333.84px;font:12px/16px 'Liberation Sans',sans-serif;color:#000;white-space:pre;transform-origin:0 0;transform:scaleX(0.8889);left:889.30px;">DISTONE NJ</div>
<div style="top:362.84px;font:12px/16px 'Liberation Sans',sans-serif;color:#000;white-space:pre;transform-origin:0 0;transform:scaleX(0.8364);left:736.70px;">Sales 1:</div>
<div style="left:777px;top:360px;width:75px;height:20px;box-sizing:border-box;border:1px solid #b3b3b3;background:#fff"></div>
<div style="top:361.84px;font:12px/16px 'Liberation Sans',sans-serif;color:#000;white-space:pre;transform-origin:0 0;transform:scaleX(0.7900);left:780.90px;">301</div>
<div style="top:362.84px;font:12px/16px 'Liberation Sans',sans-serif;color:#000;white-space:pre;transform-origin:0 0;transform:scaleX(0.8713);left:889.30px;">Scott Smith</div>
<div style="left:777px;top:389px;width:75px;height:20px;box-sizing:border-box;border:1px solid #b3b3b3;background:#fff"></div>
<svg style="left:688px;top:452px" width="29" height="18" viewBox="0 0 29 18"><rect x="7.5" y="1" width="20.5" height="16" fill="#f47a2c"/><path d="M8 1.5 L17.75 10 L27.5 1.5" stroke="#fde0c8" stroke-width="1.3" fill="none"/><path d="M8.5 16.5 L15 10.5 M27 16.5 L20.5 10.5" stroke="#fde0c8" stroke-width="1" fill="none"/><rect x="0" y="4" width="7" height="2" fill="#f47a2c"/><rect x="1.5" y="8" width="6" height="2" fill="#f47a2c"/><rect x="0" y="12" width="7" height="2" fill="#f47a2c"/></svg>
<div style="top:452.84px;font:12px/16px 'Liberation Sans',sans-serif;color:#000;white-space:pre;transform-origin:0 0;transform:scaleX(0.8471);left:727.50px;">E-Mail</div>
<div style="left:777px;top:450px;width:298px;height:21px;box-sizing:border-box;border:1px solid #b3b3b3;background:#fff"></div>
<div style="top:452.84px;font:12px/16px 'Liberation Sans',sans-serif;color:#000;white-space:pre;transform-origin:0 0;transform:scaleX(0.8845);left:780.87px;">johndoe@abccomp.com</div>
<svg style="left:717px;top:488px" width="14" height="14" viewBox="0 0 14 14"><circle cx="7" cy="7" r="6" fill="#fff" stroke="#5a5a5a" stroke-width="1"/><circle cx="7" cy="7" r="3.1" fill="#1a1a1a"/></svg>
<div style="top:486.84px;font:12px/16px 'Liberation Sans',sans-serif;color:#000;white-space:pre;transform-origin:0 0;transform:scaleX(0.8473);left:734.80px;">Display</div>
<svg style="left:717px;top:507px" width="14" height="14" viewBox="0 0 14 14"><circle cx="7" cy="7" r="6" fill="#fff" stroke="#5a5a5a" stroke-width="1"/></svg>
<div style="top:505.84px;font:12px/16px 'Liberation Sans',sans-serif;color:#000;white-space:pre;transform-origin:0 0;transform:scaleX(0.8673);left:734.80px;">Pick Slips</div>
<svg style="left:717px;top:526px" width="14" height="14" viewBox="0 0 14 14"><circle cx="7" cy="7" r="6" fill="#fff" stroke="#5a5a5a" stroke-width="1"/></svg>
<div style="top:524.84px;font:12px/16px 'Liberation Sans',sans-serif;color:#000;white-space:pre;transform-origin:0 0;transform:scaleX(0.8955);left:734.80px;">Invoices</div>
<svg style="left:717px;top:545px" width="14" height="14" viewBox="0 0 14 14"><circle cx="7" cy="7" r="6" fill="#fff" stroke="#5a5a5a" stroke-width="1"/></svg>
<div style="top:543.84px;font:12px/16px 'Liberation Sans',sans-serif;color:#000;white-space:pre;transform-origin:0 0;transform:scaleX(0.8460);left:734.80px;">PO Prints</div>
<svg style="left:717px;top:564px" width="14" height="14" viewBox="0 0 14 14"><circle cx="7" cy="7" r="6" fill="#fff" stroke="#5a5a5a" stroke-width="1"/></svg>
<div style="top:562.84px;font:12px/16px 'Liberation Sans',sans-serif;color:#000;white-space:pre;transform-origin:0 0;transform:scaleX(0.8917);left:734.80px;">Order Ackn</div>
<svg style="left:717px;top:583px" width="14" height="14" viewBox="0 0 14 14"><circle cx="7" cy="7" r="6" fill="#fff" stroke="#5a5a5a" stroke-width="1"/></svg>
<div style="top:581.84px;font:12px/16px 'Liberation Sans',sans-serif;color:#000;white-space:pre;transform-origin:0 0;transform:scaleX(0.8736);left:734.80px;">Packing Slips</div>
<svg style="left:717px;top:602px" width="14" height="14" viewBox="0 0 14 14"><circle cx="7" cy="7" r="6" fill="#fff" stroke="#5a5a5a" stroke-width="1"/></svg>
<div style="top:600.84px;font:12px/16px 'Liberation Sans',sans-serif;color:#000;white-space:pre;transform-origin:0 0;transform:scaleX(0.8611);left:734.80px;">WO Prints</div>
<div style="top:482.84px;font:bold 12px/16px 'Liberation Sans',sans-serif;color:#000;white-space:pre;transform-origin:0 0;transform:scaleX(0.9754);left:829.90px;">Notes and Instructions</div>
<div style="left:833px;top:505px;width:290px;height:118px;box-sizing:border-box;border:1px solid #b3b3b3;background:#fff"></div>
<div style="top:507.84px;font:12px/16px 'Liberation Sans',sans-serif;color:#000;white-space:pre;transform-origin:0 0;transform:scaleX(0.8697);left:836.40px;">This is a test global note for display through the E-Commerce</div>
<div style="top:520.84px;font:12px/16px 'Liberation Sans',sans-serif;color:#000;white-space:pre;transform-origin:0 0;transform:scaleX(0.8624);left:836.40px;">software.</div>
<div style="top:533.84px;font:12px/16px 'Liberation Sans',sans-serif;color:#000;white-space:pre;transform-origin:0 0;transform:scaleX(0.8875);left:836.40px;">Test Warehouse 1 Print amd Display Note</div>
<div style="top:546.84px;font:12px/16px 'Liberation Sans',sans-serif;color:#000;white-space:pre;transform-origin:0 0;transform:scaleX(0.8886);left:836.40px;">Test Warehouse 1 Display and Print Note for Work Order</div>
<div style="top:559.84px;font:12px/16px 'Liberation Sans',sans-serif;color:#000;white-space:pre;transform-origin:0 0;transform:scaleX(0.8932);left:836.40px;">Test Warehouse 1 Display and Print Note</div>
<div style="top:303.84px;font:12px/16px 'Liberation Sans',sans-serif;color:#000;white-space:pre;transform-origin:0 0;transform:scaleX(0.8746);left:1145.70px;">Cancel Date:</div>
<div style="left:1210px;top:301px;width:90px;height:20px;box-sizing:border-box;border:1px solid #b3b3b3;background:#fff"></div>
<div style="top:305.07px;font:bold 11px/14px 'Liberation Mono',monospace;color:#444;white-space:pre;transform-origin:0 0;transform:scaleX(1.0417);left:1213.75px;">04/25/2017</div>
<div style="top:333.84px;font:12px/16px 'Liberation Sans',sans-serif;color:#000;white-space:pre;transform-origin:0 0;transform:scaleX(0.8649);left:1136.00px;">Opn Pick Slips:</div>
<div style="left:1210px;top:331px;width:90px;height:20px;box-sizing:border-box;border:1px solid #b3b3b3;background:#f0f0f0"></div>
<div style="top:335.07px;font:bold 11px/14px 'Liberation Mono',monospace;color:#444;white-space:pre;transform-origin:0 0;left:1235.00px;">0</div>
<div style="top:362.84px;font:12px/16px 'Liberation Sans',sans-serif;color:#000;white-space:pre;transform-origin:0 0;transform:scaleX(0.8651);left:1142.90px;">Source Code:</div>
<div style="left:1210px;top:360px;width:35px;height:20px;box-sizing:border-box;border:1px solid #b3b3b3;background:#fff"></div>
<svg style="left:1121px;top:388px" width="30" height="26" viewBox="0 0 30 26"><rect x="7" y="1" width="22" height="17" fill="#f47a2c"/><rect x="9.5" y="3.5" width="17" height="12" fill="#fde4d0"/><path d="M11 15.5 L17 8.5 L21 12 L24 9.5 L26.5 15.5Z" fill="#f47a2c"/><circle cx="22.5" cy="6" r="1.9" fill="#f47a2c"/><circle cx="8.2" cy="17" r="4.6" fill="#fde4d0" stroke="#f47a2c" stroke-width="2.2"/><path d="M5 20.5 L1.5 24.5" stroke="#f47a2c" stroke-width="2.8" stroke-linecap="round"/></svg>
<div style="top:391.84px;font:12px/16px 'Liberation Sans',sans-serif;color:#000;white-space:pre;transform-origin:0 0;transform:scaleX(0.8473);left:1161.70px;">Image</div>
<div style="top:391.84px;font:12px/16px 'Liberation Sans',sans-serif;color:#000;white-space:pre;transform-origin:0 0;left:1203.70px;">:</div>
<div style="left:1210px;top:388px;width:90px;height:21px;box-sizing:border-box;border:1px solid #b3b3b3;background:#fff"></div>
<div style="top:420.84px;font:12px/16px 'Liberation Sans',sans-serif;color:#000;white-space:pre;transform-origin:0 0;transform:scaleX(0.8821);left:1137.60px;">Invoice Group:</div>
<div style="left:1210px;top:417px;width:90px;height:21px;box-sizing:border-box;border:1px solid #b3b3b3;background:#fff"></div>
<div style="left:1210px;top:448px;width:13px;height:13px;background:#fff;box-sizing:border-box;border:1px solid #5a5a5a"></div>
<div style="top:447.84px;font:12px/16px 'Liberation Sans',sans-serif;color:#000;white-space:pre;transform-origin:0 0;transform:scaleX(0.8577);left:1226.80px;">Ship Complete</div>
<div style="left:1210px;top:469px;width:13px;height:13px;background:#fff;box-sizing:border-box;border:1px solid #5a5a5a"></div>
<div style="top:468.84px;font:12px/16px 'Liberation Sans',sans-serif;color:#000;white-space:pre;transform-origin:0 0;transform:scaleX(0.8622);left:1226.80px;">Ship Comp 2nd</div>
<div style="left:1210px;top:490px;width:13px;height:13px;background:#fff;box-sizing:border-box;border:1px solid #5a5a5a"></div>
<div style="top:488.84px;font:12px/16px 'Liberation Sans',sans-serif;color:#000;white-space:pre;transform-origin:0 0;transform:scaleX(0.8986);left:1226.80px;">Pick and Hold</div>
<div style="left:1210px;top:511px;width:13px;height:13px;background:#dadada;box-sizing:border-box;border:1px solid #cdcdcd"></div>
<div style="top:509.84px;font:12px/16px 'Liberation Sans',sans-serif;color:#8c8c8c;white-space:pre;transform-origin:0 0;transform:scaleX(0.8714);left:1226.80px;">Pick Completed</div>
<div style="left:1210px;top:531px;width:13px;height:13px;background:#fff;box-sizing:border-box;border:1px solid #5a5a5a"></div>
<svg style="left:1211px;top:532px" width="11" height="11" viewBox="0 0 11 11"><path d="M2.3 5.2 L4.6 7.8 L9.2 2.4" stroke="#000" stroke-width="2" fill="none"/></svg>
<div style="top:529.84px;font:12px/16px 'Liberation Sans',sans-serif;color:#000;white-space:pre;transform-origin:0 0;transform:scaleX(0.8781);left:1226.80px;">Backorders</div>
<div style="left:1210px;top:550px;width:13px;height:13px;background:#fff;box-sizing:border-box;border:1px solid #5a5a5a"></div>
<div style="top:548.84px;font:12px/16px 'Liberation Sans',sans-serif;color:#000;white-space:pre;transform-origin:0 0;transform:scaleX(0.8204);left:1226.80px;">Priority</div>
<div style="left:1210px;top:569px;width:13px;height:13px;background:#fff;box-sizing:border-box;border:1px solid #5a5a5a"></div>
<div style="top:567.84px;font:12px/16px 'Liberation Sans',sans-serif;color:#000;white-space:pre;transform-origin:0 0;transform:scaleX(0.8800);left:1226.80px;">Blanket</div>
<div style="left:1210px;top:590px;width:13px;height:13px;background:#fff;box-sizing:border-box;border:1px solid #5a5a5a"></div>
<svg style="left:1211px;top:591px" width="11" height="11" viewBox="0 0 11 11"><path d="M2.3 5.2 L4.6 7.8 L9.2 2.4" stroke="#000" stroke-width="2" fill="none"/></svg>
<div style="top:588.84px;font:12px/16px 'Liberation Sans',sans-serif;color:#000;white-space:pre;transform-origin:0 0;transform:scaleX(0.8692);left:1226.80px;">Item Restrict</div>
<div style="left:1210px;top:611px;width:13px;height:13px;background:#fff;box-sizing:border-box;border:1px solid #5a5a5a"></div>
<div style="top:609.84px;font:12px/16px 'Liberation Sans',sans-serif;color:#000;white-space:pre;transform-origin:0 0;transform:scaleX(0.8693);left:1226.80px;">No Manifest Bill</div>
<div style="left:251px;top:646px;width:1109px;height:37px;background:#0b5cab"></div>
<div style="top:654.84px;font:12px/16px 'Liberation Sans',sans-serif;color:#f4f7fa;white-space:pre;transform-origin:0 0;transform:scaleX(0.9144);left:300.60px;-webkit-text-stroke:0.3px #f4f7fa;">Terms</div>
<div style="top:654.84px;font:12px/16px 'Liberation Sans',sans-serif;color:#f4f7fa;white-space:pre;transform-origin:0 0;transform:scaleX(0.9128);left:411.50px;-webkit-text-stroke:0.3px #f4f7fa;">Orders</div>
<div style="top:654.84px;font:12px/16px 'Liberation Sans',sans-serif;color:#f4f7fa;white-space:pre;transform-origin:0 0;transform:scaleX(0.8786);left:522.40px;-webkit-text-stroke:0.3px #f4f7fa;">Notes</div>
<div style="top:654.84px;font:12px/16px 'Liberation Sans',sans-serif;color:#f4f7fa;white-space:pre;transform-origin:0 0;transform:scaleX(0.8882);left:633.00px;-webkit-text-stroke:0.3px #f4f7fa;">Reset</div>
<div style="top:654.84px;font:12px/16px 'Liberation Sans',sans-serif;color:#f4f7fa;white-space:pre;transform-origin:0 0;transform:scaleX(0.9115);left:743.50px;-webkit-text-stroke:0.3px #f4f7fa;">History</div>
<div style="top:654.84px;font:12px/16px 'Liberation Sans',sans-serif;color:#f4f7fa;white-space:pre;transform-origin:0 0;transform:scaleX(0.9234);left:854.80px;-webkit-text-stroke:0.3px #f4f7fa;">Audit</div>
<div style="top:654.84px;font:12px/16px 'Liberation Sans',sans-serif;color:#f4f7fa;white-space:pre;transform-origin:0 0;transform:scaleX(0.8745);left:965.30px;-webkit-text-stroke:0.3px #f4f7fa;">Hold</div>
<div style="top:654.84px;font:12px/16px 'Liberation Sans',sans-serif;color:#f4f7fa;white-space:pre;transform-origin:0 0;transform:scaleX(0.8825);left:1076.20px;-webkit-text-stroke:0.3px #f4f7fa;">Blanket</div>
<div style="top:654.84px;font:12px/16px 'Liberation Sans',sans-serif;color:#f4f7fa;white-space:pre;transform-origin:0 0;transform:scaleX(0.8833);left:1187.00px;-webkit-text-stroke:0.3px #f4f7fa;">Ship</div>
<div style="top:654.84px;font:12px/16px 'Liberation Sans',sans-serif;color:#f4f7fa;white-space:pre;transform-origin:0 0;transform:scaleX(0.9218);left:1298.30px;-webkit-text-stroke:0.3px #f4f7fa;">Aging</div>
<svg style="left:273px;top:653px" width="20" height="21" viewBox="0 0 20 21"><path d="M1 1 H13 L19 7 V20 H1Z" stroke="#fff" stroke-width="1.8" fill="none"/><rect x="4" y="4" width="6" height="1.4" fill="#fff"/><rect x="4" y="7" width="6" height="1.4" fill="#fff"/><path d="M4 16 L8 12 L11 14 L16 9" stroke="#fff" stroke-width="1.5" fill="none"/></svg>
<svg style="left:382px;top:652px" width="22" height="22" viewBox="0 0 22 22"><path d="M6 10 V1.9 H15 L19.4 6.3 V18.1 H10" stroke="#fff" stroke-width="1.8" fill="none"/><path d="M14.2 1.9 V7 H19.4Z" fill="#fff"/><circle cx="7.2" cy="15.2" r="3.6" stroke="#fff" stroke-width="1.8" fill="none"/><path d="M4.6 17.8 L1.8 20.4" stroke="#fff" stroke-width="2.2" stroke-linecap="round"/></svg>
<svg style="left:495px;top:652px" width="17" height="22" viewBox="0 0 17 22"><rect x="1.8" y="2.8" width="13.6" height="17.6" stroke="#fff" stroke-width="1.6" fill="none"/><rect x="5.4" y="0.5" width="1.4" height="4" fill="#fff"/><rect x="10.8" y="0.5" width="1.4" height="4" fill="#fff"/><rect x="4.2" y="6.6" width="8.8" height="1.3" fill="#fff"/><rect x="4.2" y="9.4" width="8.8" height="1.3" fill="#fff"/><rect x="4.2" y="12.2" width="8.8" height="1.3" fill="#fff"/><rect x="4.2" y="15" width="8.8" height="1.3" fill="#fff"/><rect x="4.2" y="17.6" width="8.8" height="1.3" fill="#fff"/></svg>
<svg style="left:604px;top:652px" width="22" height="22" viewBox="0 0 22 22"><path d="M11.2 4.9 A7 7 0 1 0 17.3 8.4" stroke="#fff" stroke-width="3" fill="none"/><path d="M9.8 0.6 L16.2 4.9 L9.8 9.2Z" fill="#fff"/></svg>
<svg style="left:715px;top:652px" width="22" height="22" viewBox="0 0 22 22"><path d="M11.2 4.9 A7 7 0 1 1 5.1 8.4" stroke="#fff" stroke-width="3" fill="none"/><path d="M12.6 0.6 L6.2 4.9 L12.6 9.2Z" fill="#fff"/><path d="M10.4 9 L11.2 12.6 L13.8 15.2" stroke="#fff" stroke-width="1.5" fill="none"/></svg>
<svg style="left:828px;top:653px" width="19" height="22" viewBox="0 0 19 22"><path d="M5 1 H18 V19 H10" stroke="#fff" stroke-width="1.8" fill="none"/><circle cx="8" cy="13" r="5" stroke="#fff" stroke-width="2" fill="none"/><circle cx="8" cy="13" r="2" fill="#fff"/><path d="M4 17 L1 21" stroke="#fff" stroke-width="2.4"/><rect x="14" y="4" width="2" height="12" fill="#fff"/></svg>
<svg style="left:938px;top:652px" width="19" height="23" viewBox="0 0 19 23"><path d="M4.5 10 V6 A5 5 0 0 1 14.5 6 V10" stroke="#fff" stroke-width="2.6" fill="none"/><rect x="1" y="10" width="17" height="13" rx="1.5" fill="#fff"/><rect x="8.5" y="14" width="2" height="5" fill="#0b5cab"/></svg>
<svg style="left:1048px;top:652px" width="21" height="22" viewBox="0 0 21 22"><rect x="0" y="3" width="21" height="19" fill="#fff"/><rect x="4" y="0" width="2.4" height="5" fill="#fff"/><rect x="14.6" y="0" width="2.4" height="5" fill="#fff"/><rect x="2" y="8" width="17" height="12" fill="#0b5cab"/><rect x="3" y="9" width="3.2" height="2.2" fill="#fff"/><rect x="3" y="12.5" width="3.2" height="2.2" fill="#fff"/><rect x="3" y="16" width="3.2" height="2.2" fill="#fff"/><rect x="7" y="9" width="3.2" height="2.2" fill="#fff"/><rect x="7" y="12.5" width="3.2" height="2.2" fill="#fff"/><rect x="7" y="16" width="3.2" height="2.2" fill="#fff"/><rect x="11" y="9" width="3.2" height="2.2" fill="#fff"/><rect x="11" y="12.5" width="3.2" height="2.2" fill="#fff"/><rect x="11" y="16" width="3.2" height="2.2" fill="#fff"/><rect x="15" y="9" width="3.2" height="2.2" fill="#fff"/><rect x="15" y="12.5" width="3.2" height="2.2" fill="#fff"/><rect x="15" y="16" width="3.2" height="2.2" fill="#fff"/></svg>
<svg style="left:1159px;top:655px" width="22" height="17" viewBox="0 0 22 17"><rect x="7" y="1" width="15" height="11" fill="#fff"/><path d="M0 12 V7 L3 3 H7 V12Z" fill="#fff"/><circle cx="5" cy="13.5" r="2.6" fill="#fff" stroke="#0b5cab" stroke-width="1"/><circle cx="17" cy="13.5" r="2.6" fill="#fff" stroke="#0b5cab" stroke-width="1"/><rect x="9" y="4" width="11" height="1.2" fill="#0b5cab"/><rect x="9" y="7" width="11" height="1.2" fill="#0b5cab"/></svg>
<svg style="left:1268px;top:654px" width="25" height="17" viewBox="0 0 25 17"><rect x="1" y="1" width="23" height="15" rx="1.5" stroke="#fff" stroke-width="2" fill="none"/><circle cx="12.5" cy="8.5" r="5" fill="#fff"/><text x="12.5" y="12" font-size="9" font-family="Liberation Sans" font-weight="bold" fill="#0b5cab" text-anchor="middle">$</text><circle cx="5" cy="8.5" r="1.3" fill="#fff"/><circle cx="20" cy="8.5" r="1.3" fill="#fff"/></svg>
<div style="top:686.34px;font:12px/16px 'Liberation Sans',sans-serif;color:#e8e8e8;white-space:pre;transform-origin:0 0;transform:scaleX(0.9334);left:251.00px;text-decoration:underline">04/05/2017   9:17 AM</div>
<div style="top:686.34px;font:12px/16px 'Liberation Sans',sans-serif;color:#e8e8e8;white-space:pre;transform-origin:0 0;transform:scaleX(0.8798);left:475.40px;text-decoration:underline">The Development Demo Company</div>
</body></html>
